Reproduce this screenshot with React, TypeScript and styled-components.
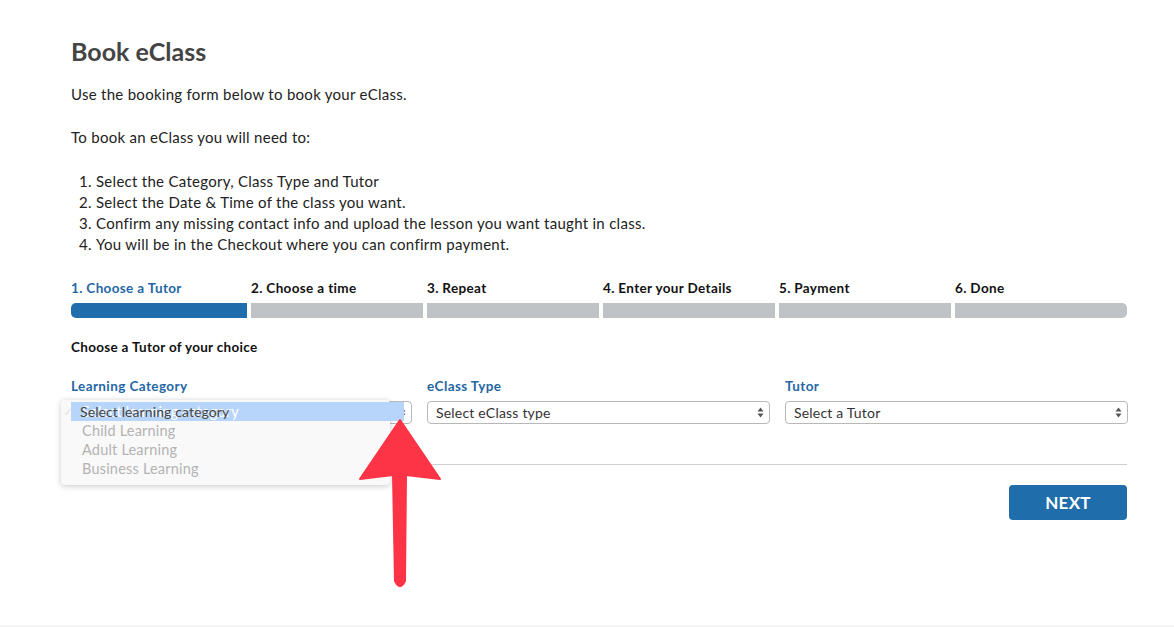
import React from "react";
import styled, { createGlobalStyle } from "styled-components";

const Global = createGlobalStyle`
  html, body { margin: 0; padding: 0; background: #fff; }
  body { font-family: "Lato", "Open Sans", sans-serif; color: #222; }
  * { box-sizing: border-box; }
`;

const Page = styled.div`
  position: relative;
  height: 627px;
  overflow: hidden;
  border-bottom: 2px solid #f4f4f4;
`;

const Container = styled.div`
  width: 1056px;
  margin-left: 71px;
  padding-top: 36px;
`;

const Title = styled.h1`
  margin: 0;
  font-size: 25px;
  line-height: 30px;
  font-weight: 700;
  color: #444;
`;

const Para = styled.p<{ $top: number }>`
  margin: 0;
  font-size: 15px;
  line-height: 21px;
  letter-spacing: 0.28px;
  color: #222;
  margin-top: ${(p) => p.$top}px;
`;

const Steps = styled.ol`
  margin: 23px 0 0;
  padding: 0 0 0 25px;
  font-size: 15px;
  line-height: 21px;
  letter-spacing: 0.28px;
  color: #222;
`;

const StepBar = styled.div`
  margin-top: 25px;
  display: grid;
  grid-template-columns: 176px repeat(5, 172px);
  column-gap: 4px;
`;

const StepCol = styled.div`
  display: flex;
  flex-direction: column;
  gap: 7px;
`;

const StepLabel = styled.div<{ $active?: boolean }>`
  font-size: 13.5px;
  font-weight: 700;
  line-height: 16px;
  letter-spacing: 0.35px;
  color: ${(p) => (p.$active ? "#2467a4" : "#111")};
`;

const Seg = styled.div<{ $active?: boolean; $first?: boolean; $last?: boolean }>`
  height: 15px;
  background: ${(p) => (p.$active ? "#1f6dab" : "#bfc3c6")};
  border-radius: ${(p) => (p.$first ? "5px 0 0 5px" : p.$last ? "0 5px 5px 0" : "0")};
`;

const SubHead = styled.div`
  margin-top: 21px;
  font-size: 13.5px;
  font-weight: 700;
  letter-spacing: 0.3px;
  color: #111;
  line-height: 16px;
`;

const Fields = styled.div`
  margin-top: 23px;
  display: grid;
  grid-template-columns: 341px 343px 343px;
  column-gap: 15px;
  padding-bottom: 40px;
  border-bottom: 1px solid #cfcfcf;
`;

const Field = styled.div`
  position: relative;
  display: flex;
  flex-direction: column;
  gap: 7px;
`;

const FieldLabel = styled.label`
  font-size: 13.5px;
  font-weight: 700;
  letter-spacing: 0.4px;
  color: #2467a4;
  line-height: 16px;
`;

const SelectBox = styled.div`
  height: 23px;
  border: 1px solid #b8b8b8;
  border-radius: 4px;
  background: #fff;
  display: flex;
  align-items: center;
  justify-content: space-between;
  padding: 0 5px 0 8px;
  font-size: 14px;
  letter-spacing: 0.2px;
  color: #333;
`;

const Arrows = styled.svg`
  width: 7px;
  height: 11px;
`;

const Menu = styled.div`
  position: absolute;
  left: -10px;
  top: 22px;
  width: 329px;
  height: 85px;
  background: #f9f9f9;
  border-radius: 4px;
  box-shadow: 0 1px 6px rgba(0, 0, 0, 0.22);
  padding-top: 2px;
  z-index: 3;
`;

const MenuItem = styled.div<{ $sel?: boolean }>`
  position: relative;
  height: 19px;
  line-height: 19px;
  font-size: 14.5px;
  letter-spacing: 0.2px;
  color: ${(p) => (p.$sel ? "#fff" : "#b3b3b3")};
  background: ${(p) => (p.$sel ? "#b7d5fb" : "transparent")};
  margin-left: ${(p) => (p.$sel ? "10px" : "0")};
  padding-left: ${(p) => (p.$sel ? "11px" : "21px")};
  width: ${(p) => (p.$sel ? "333px" : "auto")};
`;

const Check = styled.span`
  position: absolute;
  left: -8px;
  top: 0;
  font-size: 12px;
  color: #e2e2e2;
`;

const Ghost = styled.span`
  position: absolute;
  left: 9px;
  top: 0;
  color: #444;
  font-size: 14px;
  letter-spacing: 0.1px;
`;

const Footer = styled.div`
  display: flex;
  justify-content: flex-end;
  margin-top: 20px;
`;

const NextButton = styled.button`
  width: 118px;
  height: 35px;
  border: none;
  border-radius: 4px;
  background: #1f6dab;
  color: #fff;
  font-family: inherit;
  font-size: 17px;
  font-weight: 700;
  letter-spacing: 0.3px;
`;

const ArrowSvg = styled.svg`
  position: absolute;
  left: 355px;
  top: 415px;
  width: 90px;
  height: 180px;
  z-index: 4;
`;

const UpDown = () => (
  <Arrows viewBox="0 0 7 11">
    <path d="M3.5 0.5 L6.5 4.5 L0.5 4.5 Z" fill="#555" />
    <path d="M3.5 10.5 L6.5 6.5 L0.5 6.5 Z" fill="#555" />
  </Arrows>
);

const steps = ["1. Choose a Tutor", "2. Choose a time", "3. Repeat", "4. Enter your Details", "5. Payment", "6. Done"];

export default function App() {
  return (
    <Page>
      <Global />
      <Container>
        <Title>Book eClass</Title>
        <Para $top={18}>Use the booking form below to book your eClass.</Para>
        <Para $top={22}>To book an eClass you will need to:</Para>
        <Steps>
          <li>Select the Category, Class Type and Tutor</li>
          <li>Select the Date &amp; Time of the class you want.</li>
          <li>Confirm any missing contact info and upload the lesson you want taught in class.</li>
          <li>You will be in the Checkout where you can confirm payment.</li>
        </Steps>
        <StepBar>
          {steps.map((s, i) => (
            <StepCol key={s}>
              <StepLabel $active={i === 0}>{s}</StepLabel>
              <Seg $active={i === 0} $first={i === 0} $last={i === steps.length - 1} />
            </StepCol>
          ))}
        </StepBar>
        <SubHead>Choose a Tutor of your choice</SubHead>
        <Fields>
          <Field>
            <FieldLabel>Learning Category</FieldLabel>
            <SelectBox>
              <span>Select learning category</span>
              <UpDown />
            </SelectBox>
            <Menu>
              <MenuItem $sel>
                <Check>✓</Check>
                Select learning category
                <Ghost>Select learning category</Ghost>
              </MenuItem>
              <MenuItem>Child Learning</MenuItem>
              <MenuItem>Adult Learning</MenuItem>
              <MenuItem>Business Learning</MenuItem>
            </Menu>
          </Field>
          <Field>
            <FieldLabel>eClass Type</FieldLabel>
            <SelectBox>
              <span>Select eClass type</span>
              <UpDown />
            </SelectBox>
          </Field>
          <Field>
            <FieldLabel>Tutor</FieldLabel>
            <SelectBox>
              <span>Select a Tutor</span>
              <UpDown />
            </SelectBox>
          </Field>
        </Fields>
        <Footer>
          <NextButton>NEXT</NextButton>
        </Footer>
      </Container>
      <ArrowSvg viewBox="0 0 90 180">
        <path
          d="M45 5 L85 64 L51 60 L50 166 Q45 176 40 166 L38 60 L5 64 Z"
          fill="#fc3446"
          stroke="#fc3446"
          strokeWidth="2"
          strokeLinejoin="round"
        />
      </ArrowSvg>
    </Page>
  );
}
